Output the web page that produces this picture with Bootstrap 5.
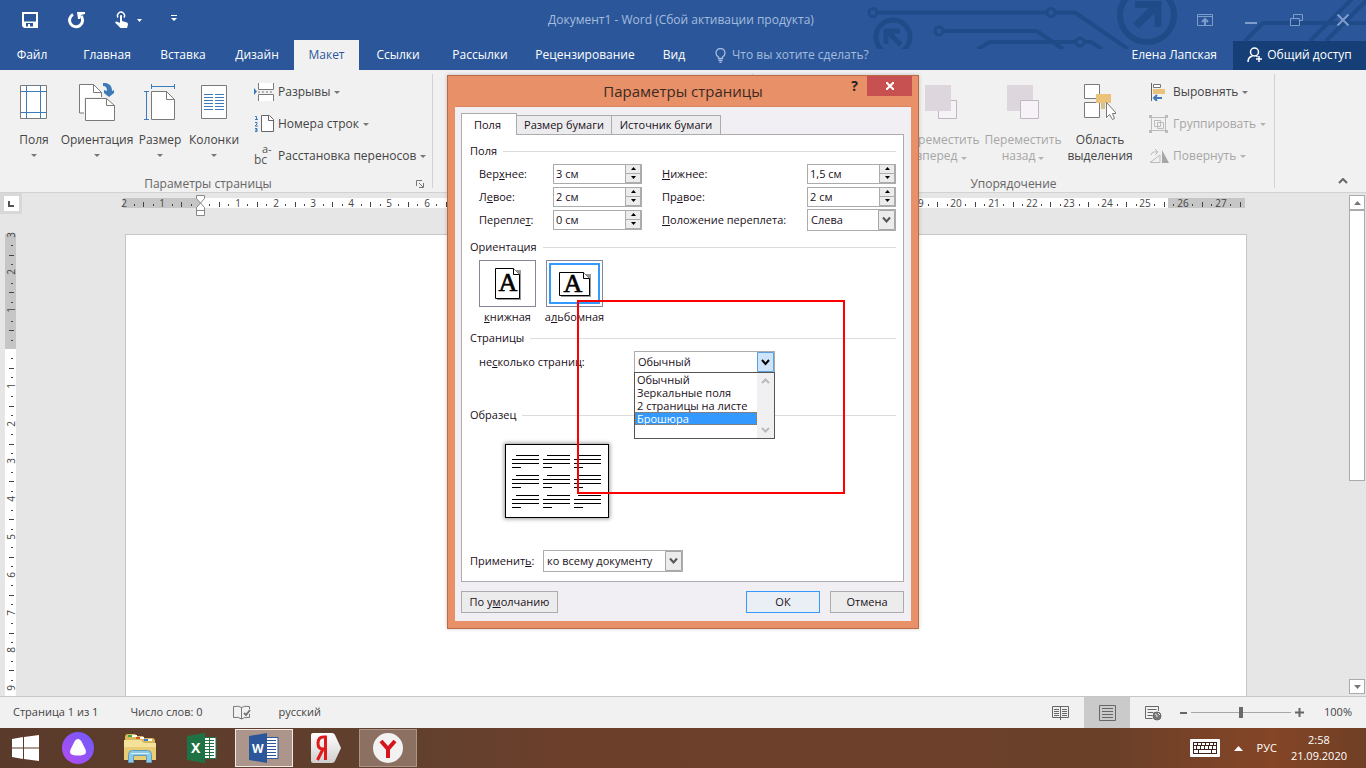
<!DOCTYPE html>
<html lang="ru">
<head>
<meta charset="utf-8">
<meta name="viewport" content="width=device-width, initial-scale=1">
<title>Документ1 - Word</title>
<link href="https://cdn.jsdelivr.net/npm/bootstrap@5.3.0/dist/css/bootstrap.min.css" rel="stylesheet">
<style>
  body { font: 12px/16px "Open Sans", "Noto Sans", sans-serif; color: #444; background: #e6e6e6; }
  button { font: inherit; color: inherit; background: none; border: 0; padding: 0; white-space: nowrap; }
  a { color: inherit; text-decoration: none; }
  svg { flex: none; display: block; }

  /* window header */
  .app-head { background: #2b579a; color: #fff; }
  .circuit { position: absolute; right: 0; top: 0; }
  .title-row { height: 40px; }
  .title-row .quick { gap: 29px; padding-left: 22px; }
  .title-row .doc-title { color: #a5bcde; left: 0; right: 4px; top: 12px; position: absolute; text-align: center; }
  .title-row .win { gap: 30px; padding-right: 15px; color: #7f9dcb; }
  .tab-row { height: 30px; }
  .tab-row a { width: 78px; }
  .tab-row a.file { width: 64px; }
  .tab-row a.cur { width: 65px; background: #f1f1f1; color: #2b579a; }
  .tab-row a.narrow { width: 74px; }
  .tab-row a.wide { width: 124px; }
  .tab-row a.slim { width: 54px; }
  .tab-row .ask { color: #a5bcde; gap: 6px; padding-left: 14px; }
  .share { width: 133px; height: 29px; background: #163f77; gap: 4px; color: #fff; }

  /* ribbon */
  .ribbon { height: 123px; background: #f1f1f1; border-bottom: 1px solid #d2d2d2; padding: 4px 0; }
  .grp { border-right: 1px solid #d2d2d2; height: 114px; }
  .grp-layout { width: 433px; }
  .grp-para { width: 320px; }
  .grp-arrange { width: 522px; }
  .grp-body { height: 102px; }
  .grp-name { color: #666; height: 16px; line-height: 16px; }
  .big { display: flex; flex-direction: column; align-items: center; width: 60px; padding-top: 8px; color: #444; }
  .big.w66 { width: 66px; }
  .big.w48 { width: 48px; }
  .big.w82 { width: 82px; }
  .big.w72 { width: 72px; }
  .big svg.ico { height: 40px; margin-bottom: 10px; }
  .big > .caret { margin-top: 6px; }
  .smalls { padding-top: 2px; }
  .smalls.arrange { padding-left: 13px; padding-right: 8px; }
  .smalls button { display: flex; align-items: center; height: 32px; gap: 4px; }
  .big.off, .off { color: #a6a6a6; }
  .caret { width: 0; height: 0; border: 3px solid transparent; border-top-color: #777; border-bottom: 0; display: inline-block; }
  .off .caret { border-top-color: #b4b4b4; }

  /* work area */
  .work { min-height: 0; display: grid; grid-template-columns: 22px 1fr 17px; grid-template-rows: 41px 1fr; }
  .corner { width: 22px; height: 21px; background: #d8d8d8; }
  .corner span { width: 15px; height: 15px; background: #fff; }
  .sheet { max-width: 1122px; width: 100%; }
  .paper { background: #fff; border: 1px solid #c6c6c6; border-bottom: 0; }
  .ruler-h, .ruler-v { overflow: visible; }
  .ruler-txt { font-size: 10px; fill: #444; text-anchor: middle; }
  .scroll { grid-column: 3; grid-row: 1 / 3; margin: 2px 1px 3px 0; background: #e6e6e6; }
  .scroll button { height: 15px; background: #fff; border: 1px solid #ababab; }
  .scroll .thumb { height: 271px; background: #fff; border: 1px solid #ababab; }

  /* status bar */
  .status { height: 32px; background: #f1f1f1; border-top: 1px solid #c6c6c6; font-size: 11px; padding-left: 13px; padding-right: 14px; }
  .status > span, .status .pct { padding-bottom: 2px; }
  .status .view { width: 46px; height: 31px; }
  .status .view.on { background: #cacaca; }
  .zoomer { appearance: none; width: 100px; height: 14px; background: linear-gradient(#a6a6a6, #a6a6a6) center / 100% 1px no-repeat; }
  .zoomer::-webkit-slider-thumb { appearance: none; width: 4px; height: 11px; background: #6a6a6a; }

  /* taskbar */
  .task { height: 40px; background: linear-gradient(90deg, #5a3a2a, #62402e 30%, #6c3f2b 42%, #6b4029 82%, #854526 93%, #6f3f25); color: #fff; }
  .task .app { width: 62px; height: 40px; }
  .task .start { width: 47px; padding-left: 3px; }
  .task .app span { width: 58px; height: 38px; display: flex; align-items: center; justify-content: center; }
  .task .run span { background: #8c7062; border: 1px solid #ab9488; }
  .task .focus span { background: #ac958a; border: 1px solid #f0eae7; }
  .tray { font-size: 11px; gap: 14px; padding-right: 19px; }

  /* page setup dialog */
  .dlg { position: absolute; top: 75px; left: 50%; margin-left: -236px; width: 472px; background: #e89068; border: 1px solid #b96a48; padding: 0 7px 7px; color: #1a1020; font-size: 11px; line-height: 14px; box-shadow: 0 0 4px #0003; }
  .dlg-title { height: 30px; font-size: 15px; color: #3c2a22; position: relative; }
  .dlg-title .x { position: absolute; right: -1px; top: 0; width: 45px; height: 20px; background: #c75050; color: #fff; }
  .dlg-title .q { position: absolute; right: 53px; top: 1px; font-size: 14px; line-height: 18px; font-weight: 700; color: #222; }
  .dlg-in { background: #f1eff3; padding: 6px 7px 8px 6px; border: 1px solid #d98660; border-width: 1px 0 0; }
  .dtabs { height: 21px; }
  .dtabs button { height: 19px; border: 1px solid #acacac; border-bottom: 0; background: #ececee; width: 96px; margin-right: -1px; }
  .dtabs button.on { height: 22px; width: 56px; padding-right: 3px; background: #fff; position: relative; z-index: 1; margin-bottom: -1px; }
  .dtabs button.src { width: 110px; }
  .pane { background: #fff; border: 1px solid #acacac; padding: 8px 7px 9px 8px; }
  .sec { display: flex; align-items: center; gap: 6px; height: 16px; margin: 0; font-size: 11px; line-height: 16px; }
  .sec::after { content: ""; flex: 1; border-top: 1px solid #dcdcdc; }
  .fields { display: grid; grid-template-columns: 74px 109px 1fr 89px; grid-auto-rows: 23px; align-items: center; margin: 3px 0 8px; padding-left: 9px; }
  .spin { width: 89px; height: 20px; border: 1px solid #ababab; background: #fff; }
  .spin input { border: 0; padding: 0 2px; flex: 1; min-width: 0; background: #fff; outline: 0; font-size: 11px; color: inherit; }
  .spin div { width: 16px; flex: none; }
  .spin button { width: 16px; height: 9px; background: #ececec; border: 1px solid #acacac; display: flex; align-items: center; justify-content: center; border-width: 0 1px 1px; }
  .pick { appearance: none; border: 1px solid #acacac; border-radius: 0; height: 22px; font-size: 11px; color: inherit; padding: 0 20px 0 3px; background: #fff right center / 17px 20px no-repeat url("data:image/svg+xml,%3Csvg xmlns='http://www.w3.org/2000/svg' viewBox='0 0 17 20'%3E%3Cpath fill='%23ececec' stroke='%23a6a6a6' d='M.5.5h16v19H.5z'/%3E%3Cpath fill='none' stroke='%23555' stroke-width='2' d='m5 7.500 3.500 4 3.500-4'/%3E%3C/svg%3E"); }
  .pick.hot { background-image: url("data:image/svg+xml,%3Csvg xmlns='http://www.w3.org/2000/svg' viewBox='0 0 17 20'%3E%3Cpath fill='%23cde4fb' stroke='%235a9fe0' d='M.5.5h16v19H.5z'/%3E%3Cpath fill='none' stroke='%23000' stroke-width='2' d='m5 8 3.500 4 3.500-4'/%3E%3C/svg%3E"); width: 141px; }
  .orient { padding: 5px 0 6px 9px; gap: 10px; }
  .orient button { width: 57px; display: flex; flex-direction: column; align-items: center; line-height: 14px; }
  .orient .face { width: 57px; height: 47px; border: 1px solid #838799; margin-bottom: 3px; padding: 2px; }
  .orient .face b { display: flex; height: 100%; align-items: center; justify-content: center; border: 2px solid #fff; }
  .orient .on .face b { border-color: #3399ff; }
  .pages { padding: 5px 0 34px 9px; }
  .pages label { width: 155px; }
  .drop { position: absolute; left: 0; top: 21px; width: 141px; height: 67px; background: #fff; border: 1px solid #555; z-index: 2; line-height: 13px; }
  .drop li { height: 13px; padding-left: 2px; white-space: nowrap; overflow: hidden; }
  .drop li.sel { background: #3399ff; color: #fff; outline: 1px dotted #c56a10; outline-offset: -1px; }
  .drop .bar { width: 17px; background: #f0f0f3; }
  .sample { margin: 21px 0 32px 35px; width: 104px; height: 74px; border: 1px solid #000; box-shadow: 0 0 4px 1px #0006; }
  .apply label { width: 73px; }
  .apply .pick { width: 140px; }
  .foot { margin-top: 9px; gap: 10px; }
  .foot button { width: 74px; height: 22px; border: 1px solid #acacac; background: #ececec; }
  .foot button.def { width: 97px; }
  .foot button.ok { border-color: #3399ff; background: #e9eff5; }
  .frame-red { position: absolute; left: 129px; top: 224px; width: 268px; height: 194px; border: 2px solid #f00; z-index: 5; pointer-events: none; }
</style>
</head>
<body class="vh-100 d-flex flex-column overflow-hidden position-relative">

<header class="app-head position-relative">
  <svg class="circuit" width="500" height="49" viewBox="866 0 500 49" fill="none" stroke="#204b89" stroke-width="4">
    <circle cx="873" cy="12.500" r="4" stroke-width="3"/><path d="M877 12.500H1046M1055 12.500h20L1128 49"/>
    <circle cx="1051" cy="12.500" r="4" stroke-width="3"/>
    <circle cx="893" cy="37" r="17" stroke-width="5"/><path stroke-width="5" d="m901 45-12-12M886 44V31h14"/>
    <circle cx="939" cy="31" r="4" stroke-width="3"/><path d="M943 31h94l26 18M978 49l12-7h86M1085 42h6l11 7"/>
    <circle cx="1080" cy="42" r="4" stroke-width="3"/>
    <circle cx="1147" cy="15" r="27" stroke-width="6"/><path stroke-width="8" d="m1136 26 18-18"/><path stroke-width="7" d="M1135 4.500h23V27"/>
    <path d="m1245 41 18-18h103M1310 41l42-42M1326 41l42-42"/>
  </svg>
  <div class="title-row d-flex align-items-center justify-content-between position-relative">
    <div class="quick d-flex align-items-center">
      <button aria-label="Сохранить"><svg width="17" height="17" viewBox="0 0 17 17"><path fill="#fff" fill-rule="evenodd" d="M0 0h16v16H2l-2-2zM2 2v7.500h12V2zM4 11v3.500h2V12h2v2.500h3V11z"/></svg></button>
      <button aria-label="Повторить"><svg width="18" height="18" viewBox="0 0 18 18"><path d="M5 3.500A6.500 6.500 0 1 0 13 5" fill="none" stroke="#fff" stroke-width="3"/><path fill="#fff" d="M9 1h8v2l-4 1-1 4h-2z"/></svg></button>
      <button aria-label="Режим касания" class="d-flex align-items-center gap-2"><svg width="14" height="18" viewBox="0 0 14 18"><path d="M3 6.500a3.500 3.500 0 1 1 6 0" fill="none" stroke="#fff" stroke-width="1.500"/><path fill="#fff" d="M5 4.500q1-1 2 0V10l5 1.500q1 .5 1 2L12 17H5.500L0 11.500q1-1.500 3-.5l2 1z"/></svg><svg width="5" height="3"><path fill="#fff" d="M0 0h5L2.500 3z"/></svg></button>
      <button aria-label="Настройка панели" class="pb-1"><svg width="6" height="6"><path fill="#fff" d="M0 0h6v1H0zM0 3h6L3 6z"/></svg></button>
    </div>
    <div class="doc-title">Документ1 - Word (Сбой активации продукта)</div>
    <div class="win d-flex align-items-center">
      <button aria-label="Параметры ленты"><svg width="16" height="12" viewBox="0 0 16 12" fill="none" stroke="currentColor"><path d="M.5.5h15v11H.5zM.5 2.500h15"/><path stroke-width="2" d="M8 11V5M5 8l3-3 3 3"/></svg></button>
      <button aria-label="Свернуть"><svg width="16" height="12"><path fill="currentColor" d="M2 8h12v2H2z"/></svg></button>
      <button aria-label="Окно"><svg width="16" height="12" viewBox="0 0 16 12" fill="none" stroke="currentColor"><path d="M4.500 4V.5h9v6h-3M1.500 4.500h9v7h-9z"/></svg></button>
      <button aria-label="Закрыть"><svg width="16" height="12" viewBox="0 0 16 12"><path d="m2.500.5 11 11M13.500.5l-11 11" stroke="currentColor" stroke-width="2"/></svg></button>
    </div>
  </div>
  <div class="tab-row d-flex align-items-center">
    <nav class="d-flex h-100 text-center">
      <a href="#" class="file d-flex align-items-center justify-content-center">Файл</a>
      <a href="#" class="d-flex align-items-center justify-content-center ms-1">Главная</a>
      <a href="#" class="narrow d-flex align-items-center justify-content-center">Вставка</a>
      <a href="#" class="narrow d-flex align-items-center justify-content-center">Дизайн</a>
      <a href="#" class="cur d-flex align-items-center justify-content-center">Макет</a>
      <a href="#" class="d-flex align-items-center justify-content-center">Ссылки</a>
      <a href="#" class="d-flex align-items-center justify-content-center ms-1">Рассылки</a>
      <a href="#" class="wide d-flex align-items-center justify-content-center ms-1">Рецензирование</a>
      <a href="#" class="slim d-flex align-items-center justify-content-center">Вид</a>
    </nav>
    <div class="ask d-flex align-items-center">
      <svg width="11" height="15" viewBox="0 0 11 15" fill="none" stroke="currentColor" stroke-width="1.300"><path d="M3.500 10.500V9Q1 7.500 1 5a4.500 4.500 0 0 1 9 0q0 2.500-2.500 4v1.500zM3.500 12.500h4M4.500 14.500h2"/></svg>
      <span>Что вы хотите сделать?</span>
    </div>
    <div class="ms-auto me-3">Елена Лапская</div>
    <button class="share d-flex align-items-center justify-content-center position-relative">
      <svg width="16" height="16" viewBox="0 0 16 16" fill="none" stroke="#fff" stroke-width="1.500"><circle cx="7.500" cy="5" r="4"/><path d="M1 15q0-5 4.500-6M9.500 9l1 1M12 9v6M9 12h6"/></svg>
      Общий доступ
    </button>
  </div>
</header>

<section class="ribbon d-flex">
  <div class="grp grp-layout position-relative">
    <div class="grp-body d-flex ps-1">
      <button class="big"><svg class="ico" width="28" viewBox="0 0 28 40" fill="none"><path fill="#fff" stroke="#7a7a7a" d="M.5 3.500h26v33H.5z"/><path stroke="#3c7ab8" d="M6.500 3.500v33M20.500 3.500v33M.5 9.500h26M.5 30.500h26"/></svg>Поля<i class="caret"></i></button>
      <button class="big w66"><svg class="ico" width="36" viewBox="0 0 36 40"><path fill="#fff" stroke="#7a7a7a" d="M.5 2.500h14l8 8v20.500H.5z"/><path fill="none" stroke="#7a7a7a" d="M14.500 2.500v8h8"/><path fill="#f1f1f1" d="M5 15h19v18H5z"/><path fill="#fff" stroke="#7a7a7a" d="M6.500 16.500h21l8 7v15h-29z"/><path fill="none" stroke="#7a7a7a" d="M27.500 16.500v7h8"/><path fill="#3c7ab8" d="M24 1h3q6 1 6 8l2-1v3l-5 4-5-4V8l3 1q0-5-4-5z"/></svg>Ориентация<i class="caret"></i></button>
      <button class="big"><svg class="ico" width="32" viewBox="0 0 32 40"><path fill="#fff" stroke="#7a7a7a" d="M7.500 9.500h15l8 8v20h-23z"/><path fill="none" stroke="#7a7a7a" d="M22.500 9.500v8h8"/><path fill="none" stroke="#3c7ab8" d="M7.500 2v5M30.500 2v5M7.500 4.500h23M0 9.500h5M0 37.500h5M2.500 9.500v28"/></svg>Размер<i class="caret"></i></button>
      <button class="big w48"><svg class="ico" width="26" viewBox="0 0 26 40"><path fill="#fff" stroke="#7a7a7a" d="M.5 3.500h25v33H.5z"/><path stroke="#3c7ab8" d="M3 12.500h9M14 12.500h9M3 15.500h9M14 15.500h9M3 18.500h9M14 18.500h9M3 21.500h9M14 21.500h9M3 24.500h9M14 24.500h9M3 27.500h9M14 27.500h9"/></svg>Колонки<i class="caret"></i></button>
      <div class="smalls ps-3">
        <button><svg width="20" height="18" viewBox="0 0 20 18"><path fill="#3c7ab8" d="M0 5l3 3.500L0 12z"/><path fill="#fff" stroke="#7a7a7a" d="M4.500 0v6.500h15V0M4.500 18v-6.500h15V18"/><path stroke="#7a7a7a" stroke-dasharray="2 2" d="M4 9h16"/></svg>Разрывы <i class="caret"></i></button>
        <button><svg width="20" height="18" viewBox="0 0 20 18"><path fill="#fff" stroke="#666" d="M7.500.5h8l4 4v12h-12z"/><path fill="none" stroke="#666" d="M14.500.5v5h5"/><path fill="none" stroke="#3c7ab8" d="M1 1.500h1.500V4M1 4.500h3M1 7.500h2v1.500l-2 2h3M1 13.500h2v1.500h-1.500H3V16.500H1"/></svg>Номера строк <i class="caret"></i></button>
        <button><svg width="20" height="24" viewBox="0 0 20 24" fill="#555"><text x="0" y="20">bc</text><text x="8" y="9" font-size="11">a-</text></svg>Расстановка переносов <i class="caret"></i></button>
      </div>
    </div>
    <div class="grp-name text-center pe-3">Параметры страницы</div>
    <button class="position-absolute bottom-0 end-0 me-2" aria-label="Параметры страницы"><svg width="8" height="8" viewBox="0 0 8 8" fill="none" stroke="#777"><path d="M.5 6V.5H6M3 3l4 4M7.500 3v4.500H3"/></svg></button>
  </div>
  <div class="grp grp-para"></div>
  <div class="grp grp-arrange">
    <div class="grp-body d-flex justify-content-end">
      <button class="big w82 off"><svg class="ico" width="34" viewBox="0 0 34 40"><path fill="#f6f2f8" stroke="#bdb9be" d="M14.500 18.500h18v18h-18z"/><path fill="#ddd7dd" d="M1 3h26v26H1z"/></svg>Переместить<span>вперед <i class="caret"></i></span></button>
      <button class="big w82 off"><svg class="ico" width="34" viewBox="0 0 34 40"><path fill="#ddd7dd" d="M1 3h26v26H1z"/><path fill="#f6f2f8" stroke="#bdb9be" d="M14.500 18.500h18v18h-18z"/></svg>Переместить<span>назад <i class="caret"></i></span></button>
      <button class="big w72"><svg class="ico" width="32" viewBox="0 0 32 40"><path fill="#fff" stroke="#7a7a7a" d="M.5 2.500h15v14H.5zM.5 20.500h15v15H.5z"/><path fill="#ebc27a" d="M12 12h15v9H12z"/><path fill="#d8c08e" d="M17 21h4v6h-4z"/><path fill="#fff" stroke="#777" d="M22.500 20.500v15l3-3 3 5 2-1-2-5h4z"/></svg>Область<span>выделения</span></button>
      <div class="smalls arrange">
        <button><svg width="20" height="18" viewBox="0 0 20 18"><path stroke="#666" d="M2.500 0v18"/><path fill="#fff" stroke="#777" d="M4.500 1.500h7v3h-7z"/><path fill="#ebc27a" d="M4 6h12v5H4z"/><path fill="none" stroke="#3c7ab8" stroke-width="2" d="M5 15h8M8 12l-3 3 3 3"/></svg>Выровнять <i class="caret"></i></button>
        <button class="off"><svg width="20" height="18" viewBox="0 0 20 18" fill="none" stroke="#bbb"><path d="M2.500 2.500h14v13h-14zM5.500 5.500h6v6h-6zM8.500 7.500h6v6h-6z"/><path fill="#bbb" stroke="none" d="M0 0h3v3H0zM16 0h3v3h-3zM0 15h3v3H0zM16 15h3v3h-3z"/></svg>Группировать <i class="caret"></i></button>
        <button class="off"><svg width="20" height="14" viewBox="0 0 20 14"><path fill="none" stroke="#bbb" d="M1 13.500h10V6zM2 6q1-4 6-3M6 0l3 3-3 3"/><path fill="#a6a6a6" d="M13 1l7 13h-7z"/></svg>Повернуть <i class="caret"></i></button>
      </div>
    </div>
    <div class="grp-name text-center">Упорядочение</div>
  </div>
  <button class="ms-auto align-self-end me-3 mb-1" aria-label="Свернуть ленту"><svg width="14" height="6" viewBox="0 0 14 6"><path d="m3 5 4-4 4 4" fill="none" stroke="#666" stroke-width="2"/></svg></button>
</section>

<main class="work flex-grow-1">
  <div class="corner d-flex align-items-center justify-content-center"><span class="d-flex align-items-center justify-content-center"><svg width="6" height="6"><path fill="#555" d="M0 0h2v4h4v2H0z"/></svg></span></div>
  <div class="sheet mx-auto"><svg class="ruler-h" id="rulerH" width="1122" height="22" viewBox="0 0 1122 22"></svg></div>
  <svg class="ruler-v" id="rulerV" width="22" height="463" viewBox="0 0 22 463"></svg>
  <div class="sheet paper mx-auto"></div>
  <div class="scroll d-flex flex-column">
    <button aria-label="Вверх" class="d-flex align-items-center justify-content-center"><svg width="7" height="4"><path fill="#777" d="M0 4h7L3.500 0z"/></svg></button>
    <div class="thumb"></div>
    <button aria-label="Вниз" class="mt-auto d-flex align-items-center justify-content-center"><svg width="7" height="4"><path fill="#777" d="M0 0h7L3.500 4z"/></svg></button>
  </div>
</main>

<footer class="status d-flex align-items-center">
  <span>Страница 1 из 1</span>
  <span class="ms-4 ps-2">Число слов: 0</span>
  <svg class="ms-4 me-4" width="28" height="16" viewBox="-6 0 28 16" fill="none" stroke="#777"><path d="M8.500 2.500Q6 .5.500 1.500v11q5.500-1 8 1.500zM8.500 2.500Q11 .5 16.500 1.500V4M8.500 14q2-2 8-1.500V9"/><path stroke-width="2" d="m11 8 2 2 4-5"/></svg>
  <span>русский</span>
  <div class="ms-auto d-flex align-items-center">
    <button class="view d-flex align-items-center justify-content-center" aria-label="Режим чтения"><svg width="18" height="15" viewBox="0 0 18 15" fill="none" stroke="#666"><path d="M8.500 1.500H.5v11h8zM8.500 1.500h8v11h-8zV15M2 4.500h5M2 6.500h5M2 8.500h5M2 10.500h5M10 4.500h5M10 6.500h5M10 8.500h5M10 10.500h5"/></svg></button>
    <button class="view on d-flex align-items-center justify-content-center" aria-label="Разметка страницы"><svg width="17" height="16" viewBox="0 0 17 16" fill="none" stroke="#666"><path d="M.5.5h16v15H.5zM3 3.500h11M3 6.500h11M3 9.500h11M3 12.500h11"/></svg></button>
    <button class="view d-flex align-items-center justify-content-center" aria-label="Веб-документ"><svg width="17" height="16" viewBox="0 0 17 16" fill="none" stroke="#666"><path d="M13.500 6V1.500H.5v12h7M2.500 4.500h9M2.500 7.500h6M2.500 10.500h5"/><circle cx="12" cy="11" r="4" fill="#777"/><path stroke="#eee" d="M10 9q3 1 2 3M13 8l2 2"/></svg></button>
    <svg class="ms-1 me-1" width="7" height="2"><path fill="#666" d="M0 0h7v2H0z"/></svg>
    <input class="zoomer" type="range" min="0" max="100" value="50" aria-label="Масштаб">
    <svg class="ms-1" width="9" height="9"><path fill="#666" d="M0 3.500h9v2H0zM3.500 0h2v9h-2z"/></svg>
    <span class="pct ms-3 ps-1">100%</span>
  </div>
</footer>

<nav class="task d-flex align-items-center">
  <button class="start d-flex align-items-center justify-content-center" aria-label="Пуск"><svg width="27" height="26" viewBox="0 0 27 26"><path fill="#fff" d="M0 4l11-2v10.500H0zM12 2l15-2v12.500H12zM0 13.500h11V24L0 22zM12 13.500h15V26l-15-2z"/></svg></button>
  <button class="app d-flex align-items-center justify-content-center" aria-label="Алиса"><svg width="32" height="32" viewBox="0 0 32 32"><defs><linearGradient id="al" x1="0" y1="1" x2="1" y2="0"><stop offset="0" stop-color="#b64cf4"/><stop offset="1" stop-color="#6a5cf8"/></linearGradient></defs><circle cx="16" cy="16" r="16" fill="url(#al)"/><path fill="#fff" d="M16 7q2.500 0 4 3.500l3.500 7Q25 22 21 23q-5 1-10 0-4-1-2.500-5.500l3.500-7Q13.500 7 16 7z"/></svg></button>
  <button class="app d-flex align-items-center justify-content-center" aria-label="Проводник"><svg width="32" height="30" viewBox="0 0 32 30"><path fill="#d9b85c" d="M1 4q0-3 3-3h7l2 2h6l1 2h8q3 0 3 3v19H1z"/><path fill="#3ba53b" d="M4 2h4v2H4z"/><path fill="#d9542b" d="M12 4h4v2h-4z"/><path fill="#2d82c9" d="M20 6h4v2h-4z"/><path fill="#fff" d="M8 2h5v2H8zM16 4h4v2h-4zM24 6h4v2h-4z"/><path fill="#f4e29a" d="M0 7h17l3 3h12v17H0z"/><path fill="#e9cd74" d="M0 14h32v13H0z"/><path fill="#8fc9e6" stroke="#5b9fc4" d="M4.500 29.500v-8q0-4 4-4h15q4 0 4 4v8h-5v-7h-13v7z"/><path stroke="#d5eefa" d="M7 20.500h18"/></svg></button>
  <button class="app d-flex align-items-center justify-content-center" aria-label="Excel"><svg width="30" height="30" viewBox="0 0 30 30"><path fill="#fff" stroke="#1f7244" d="M17 4.500h12v21H17z"/><path stroke="#1f7244" d="M18 7.500h9M18 10.500h9M18 13.500h9M18 16.500h9M18 19.500h9M18 22.500h9M22.500 5v20"/><path fill="#1f7244" d="M0 3l18-3v30L0 27z"/><text x="4" y="20" fill="#fff" font-size="14" font-weight="700">X</text></svg></button>
  <button class="app focus d-flex align-items-center justify-content-center" aria-label="Word"><span><svg width="30" height="30" viewBox="0 0 30 30"><path fill="#fff" stroke="#2b579a" d="M17 4.500h12v21H17z"/><path stroke="#2b579a" d="M18 7.500h9M18 10.500h9M18 13.500h9M18 16.500h9M18 19.500h9M18 22.500h9"/><path fill="#2b579a" d="M0 3l18-3v30L0 27z"/><text x="3" y="20" fill="#fff" font-size="12" font-weight="700">W</text></svg></span></button>
  <button class="app d-flex align-items-center justify-content-center" aria-label="Яндекс"><svg width="30" height="30" viewBox="0 0 30 30"><defs><linearGradient id="ya" x2="0" y2="1"><stop offset="0" stop-color="#fff"/><stop offset="1" stop-color="#cfcfcf"/></linearGradient></defs><path fill="url(#ya)" d="M2 0h19q2 0 3 2l6 13-6 13q-1 2-3 2H2q-2 0-2-2V2q0-2 2-2z"/><path fill="none" stroke="#e01a1a" stroke-width="3" d="M14.500 27V4h-2Q7 4 7 10.500 7 16 12 16h3M12 16 6.500 27"/></svg></button>
  <button class="app run d-flex align-items-center justify-content-center" aria-label="Яндекс Браузер"><span><svg width="30" height="30" viewBox="0 0 30 30"><circle cx="15" cy="15" r="15" fill="#f2f2f2"/><path fill="none" stroke="#d8141c" stroke-width="4" d="M8 8l7 8 7-8M15 15v10"/></svg></span></button>
  <div class="tray ms-auto d-flex align-items-center">
    <svg width="30" height="18" viewBox="0 0 30 18"><rect width="30" height="18" rx="1" fill="#fff"/><path fill="#3f2318" d="M3 3h24v12H3z"/><path fill="#fff" d="M4 4h3v2H4zM8 4h3v2H8zM12 4h3v2h-3zM16 4h3v2h-3zM20 4h3v2h-3zM24 4h2v2h-2zM4 7h2v3H4zM7 7h3v3H7zM11 7h3v3h-3zM15 7h3v3h-3zM19 7h3v3h-3zM23 7h3v3h-3zM4 11h4v3H4zM9 11h12v3H9zM22 11h4v3h-4z"/></svg>
    <svg width="9" height="5"><path fill="#fff" d="M0 5h9L4.500 0z"/></svg>
    <span>РУС</span>
    <div class="text-center">2:58<br>21.09.2020</div>
  </div>
</nav>

<div class="dlg" role="dialog" aria-labelledby="dlgName">
  <div class="dlg-title d-flex align-items-center justify-content-center">
    <span id="dlgName">Параметры страницы</span>
    <button class="q" aria-label="Справка">?</button>
    <button class="x d-flex align-items-center justify-content-center" aria-label="Закрыть окно"><svg width="8" height="8" viewBox="0 0 8 8"><path d="m0 0 8 8M8 0 0 8" stroke="#fff" stroke-width="2"/></svg></button>
  </div>
  <div class="dlg-in">
    <div class="dtabs d-flex align-items-end">
      <button class="on">Поля</button><button>Размер бумаги</button><button class="src">Источник бумаги</button>
    </div>
    <div class="pane">
      <h2 class="sec">Поля</h2>
      <div class="fields">
        <label for="f1">Вер<u>х</u>нее:</label>
        <div class="spin d-flex"><input id="f1" value="3 см"><div><button aria-label="Больше"><svg width="5" height="3"><path d="M0 3h5L2.500 0z"/></svg></button><button aria-label="Меньше"><svg width="5" height="3"><path d="M0 0h5L2.500 3z"/></svg></button></div></div>
        <label for="f2"><u>Н</u>ижнее:</label>
        <div class="spin d-flex"><input id="f2" value="1,5 см"><div><button aria-label="Больше"><svg width="5" height="3"><path d="M0 3h5L2.500 0z"/></svg></button><button aria-label="Меньше"><svg width="5" height="3"><path d="M0 0h5L2.500 3z"/></svg></button></div></div>
        <label for="f3">Л<u>е</u>вое:</label>
        <div class="spin d-flex"><input id="f3" value="2 см"><div><button aria-label="Больше"><svg width="5" height="3"><path d="M0 3h5L2.500 0z"/></svg></button><button aria-label="Меньше"><svg width="5" height="3"><path d="M0 0h5L2.500 3z"/></svg></button></div></div>
        <label for="f4">Пр<u>а</u>вое:</label>
        <div class="spin d-flex"><input id="f4" value="2 см"><div><button aria-label="Больше"><svg width="5" height="3"><path d="M0 3h5L2.500 0z"/></svg></button><button aria-label="Меньше"><svg width="5" height="3"><path d="M0 0h5L2.500 3z"/></svg></button></div></div>
        <label for="f5">Перепле<u>т</u>:</label>
        <div class="spin d-flex"><input id="f5" value="0 см"><div><button aria-label="Больше"><svg width="5" height="3"><path d="M0 3h5L2.500 0z"/></svg></button><button aria-label="Меньше"><svg width="5" height="3"><path d="M0 0h5L2.500 3z"/></svg></button></div></div>
        <label for="f6"><u>П</u>оложение переплета:</label>
        <select id="f6" class="pick"><option>Слева</option><option>Сверху</option></select>
      </div>
      <h2 class="sec">Ориентация</h2>
      <div class="orient d-flex">
        <button><span class="face"><b><svg width="28" height="34" viewBox="0 0 28 34"><path fill="#999" d="M3 3h24v30H3z"/><path fill="#fff" stroke="#000" d="M1.500 1.500h18l6 6v24h-24z"/><path fill="#fff" stroke="#000" d="M19.500 1.500v6h6"/><text x="14" y="24" font-family="Liberation Serif, serif" font-size="26" font-weight="400" stroke="#000" stroke-width=".7" text-anchor="middle">A</text></svg></b></span><span><u>к</u>нижная</span></button>
        <button class="on"><span class="face"><b><svg width="34" height="28" viewBox="0 0 34 28"><path fill="#999" d="M3 4h30v23H3z"/><path fill="#fff" stroke="#000" d="M1.500 2.500h24l6 6v17h-30z"/><path fill="#fff" stroke="#000" d="M25.500 2.500v6h6"/><text x="15" y="22" font-family="Liberation Serif, serif" font-size="26" font-weight="400" stroke="#000" stroke-width=".7" text-anchor="middle">A</text></svg></b></span><span>а<u>л</u>ьбомная</span></button>
      </div>
      <h2 class="sec">Страницы</h2>
      <div class="pages d-flex align-items-center">
        <label for="f7">не<u>с</u>колько страниц:</label>
        <div class="position-relative">
          <select id="f7" class="pick hot d-block"><option>Обычный</option></select>
          <div class="drop d-flex" role="listbox" aria-label="несколько страниц">
            <ul class="list-unstyled m-0 flex-grow-1">
              <li role="option">Обычный</li><li role="option">Зеркальные поля</li><li role="option">2 страницы на листе</li><li role="option" class="sel" aria-selected="true">Брошюра</li>
            </ul>
            <div class="bar d-flex flex-column justify-content-between align-items-center pt-1 pb-1">
              <svg width="9" height="8" viewBox="0 0 9 8"><path d="M1 6l3.500-3.500L8 6" fill="none" stroke="#bbb" stroke-width="2"/></svg>
              <svg width="9" height="8" viewBox="0 0 9 8"><path d="M1 2l3.500 3.500L8 2" fill="none" stroke="#bbb" stroke-width="2"/></svg>
            </div>
          </div>
        </div>
      </div>
      <h2 class="sec">Образец</h2>
      <div class="sample"><svg id="sample" width="101" height="71" viewBox="0 0 101 71" stroke="#000"></svg></div>
      <div class="apply d-flex align-items-center">
        <label for="f8">Применит<u>ь</u>:</label>
        <select id="f8" class="pick"><option>ко всему документу</option></select>
      </div>
    </div>
    <div class="foot d-flex">
      <button class="def me-auto">По у<u>м</u>олчанию</button>
      <button class="ok">ОК</button>
      <button>Отмена</button>
    </div>
  </div>
  <div class="frame-red"></div>
</div>

<script src="https://cdn.jsdelivr.net/npm/bootstrap@5.3.0/dist/js/bootstrap.bundle.min.js"></script>
<script>
  // Rulers: one centimetre is 37.8 px at 100 %
  const CM = 37.8;
  function marks(from, to, zero, vertical) {
    let s = '';
    for (let q = from * 4; q <= to * 4; q++) {
      const r = Math.round(zero + q * CM / 4);
      if (q === 0) continue;
      if (q % 4 === 0) {
        const n = Math.abs(q / 4);
        s += vertical ? `<text class="ruler-txt" transform="translate(15 ${r - 1}) rotate(-90)">${n}</text>` : `<text class="ruler-txt" x="${r}" y="14">${n}</text>`;
      } else {
        const len = q % 2 === 0 ? 5 : 2;
        s += vertical ? `<rect x="${12 - len / 2 | 0}" y="${r}" width="${len}" height="1" fill="#444"/>` : `<rect x="${r}" y="${12 - len / 2 | 0}" width="1" height="${len}" fill="#444"/>`;
      }
    }
    return s;
  }
  rulerH.innerHTML = '<path fill="#c6c6c6" d="M-2 5h1122v10H-2z"/><path fill="#fff" d="M76 5h967v10H76z"/>' + marks(-2, 27.500, 75, false) +
    '<path fill="#fff" stroke="#888" d="M71.500 2.500h8v3l-4 4.500 4 4.500v8h-8v-8l4-4.500-4-4.500zM71.500 17.500h8"/>';
  rulerV.innerHTML = '<path fill="#fff" d="M5 0h11v463H5z"/><path fill="#c6c6c6" d="M5 0h11v115H5z"/>' + marks(-3, 9, 115, true);
  // Text lines of the three-column preview
  let d = '';
  for (let r = 0; r < 3; r++) for (let c = 0; c < 3; c++) {
    const x = 6 + c * 31, y = 10.5 + r * 20;
    d += `M${x + 4} ${y}h23M${x} ${y + 4}h27M${x} ${y + 8}h27M${x} ${y + 12}h9`;
  }
  sample.innerHTML = `<path d="${d}"/>`;
</script>
</body>
</html>
